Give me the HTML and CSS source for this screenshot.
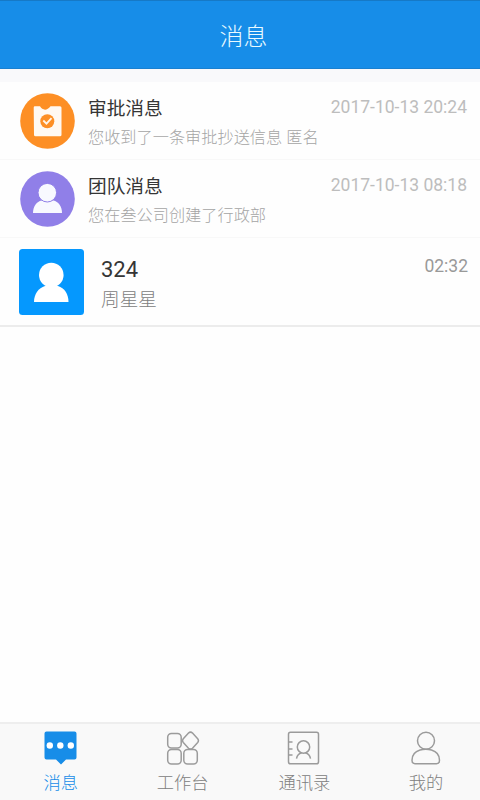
FILE: index.html
```html
<!DOCTYPE html>
<html lang="zh-CN">
<head>
<meta charset="UTF-8">
<title>消息</title>
<link rel="stylesheet" href="styles.css">
</head>
<body>
<div class="app">
  <header class="header"><h1>消息</h1></header>
  <main class="list">
    <article class="row">
      <svg class="avatar" viewBox="0 0 55 56">
        <ellipse cx="27.5" cy="28" rx="27.3" ry="27.8" fill="#fd8f25"/>
        <path d="M14.500 13.300h5.500c2.500 4.200 7 4.700 10.500 0h9.500q1.500 0 1.500 1.500v27q0 1.500-1.500 1.500h-24.500q-1.500 0-1.500-1.500l-.3-27q0-1.500 .8-1.500z" fill="#fff9f2"/>
        <circle cx="27.300" cy="28.200" r="7" fill="#fd8f25"/>
        <path d="M23.300 27.500l3.200 3.200 5-5.500" fill="none" stroke="#fff5e8" stroke-width="1.800"/>
      </svg>
      <div class="content">
        <div class="line"><h2>审批消息</h2><time>2017-10-13 20:24</time></div>
        <p>您收到了一条审批抄送信息 匿名</p>
      </div>
    </article>
    <article class="row">
      <svg class="avatar" viewBox="0 0 55 56">
        <ellipse cx="27.500" cy="28" rx="27.300" ry="27.800" fill="#907fe8"/>
        <path d="M13 42c0-7 4-11.500 8.500-12.500h12c4.500 1 8.500 5.500 8.500 12.500z" fill="#f8f9ff"/>
        <circle cx="27.300" cy="21.700" r="9.300" fill="#f8f9ff" stroke="#907fe8" stroke-width="1"/>
      </svg>
      <div class="content">
        <div class="line"><h2>团队消息</h2><time>2017-10-13 08:18</time></div>
        <p>您在叁公司创建了行政部</p>
      </div>
    </article>
    <article class="row chat">
      <svg class="photo" viewBox="0 0 65 66">
        <rect width="65" height="66" rx="3.500" fill="#0598fe"/>
        <path d="M15 53c0-8 4.500-14 11-16h13c6.500 2 10.500 8 10.500 16z" fill="#fff"/>
        <circle cx="32.300" cy="26" r="12.300" fill="#fff"/>
      </svg>
      <div class="content">
        <div class="line"><h2>324</h2><time>02:32</time></div>
        <p>周星星</p>
      </div>
    </article>
  </main>
  <nav class="tabs">
    <a class="tab active">
      <svg viewBox="0 0 36 36"><path d="M3.500 .5h28q2 0 2 2v24q0 2-2 2H23l-5 5-5-5H3.500q-2 0-2-2V2.500q0-2 2-2z" fill="#178de8"/><g fill="#fff"><circle cx="6.800" cy="14.500" r="3.200"/><circle cx="17.300" cy="14.500" r="3.200"/><circle cx="27.800" cy="14.500" r="3.200"/></g></svg>
      <span>消息</span>
    </a>
    <a class="tab">
      <svg viewBox="0 0 36 36"><g class="stroke"><rect x="2.700" y="2.500" width="13.500" height="14.500" rx="3.800"/><rect x="2.700" y="18.500" width="13.500" height="14.500" rx="3.800"/><rect x="18.800" y="18.500" width="13.500" height="14.500" rx="3.800"/><path d="M23.500 2q2-1.800 4 0l5.200 5.700q1.500 1.900 0 3.800l-5.200 5.700q-2 1.800-4 0l-5.200-5.700q-1.500-1.900 0-3.800z"/></g></svg>
      <span>工作台</span>
    </a>
    <a class="tab">
      <svg viewBox="0 0 36 36"><g class="stroke"><rect x="2.500" y="1.300" width="30" height="31.500" rx="2"/><path d="M2.500 11H6.500M2.500 18H6.500M2.500 24H6.500M10.500 27.700c.6-3.200 2.500-5.400 5.200-6M24.500 27.700c-.6-3.200-2.500-5.400-5.200-6"/><circle cx="17.500" cy="16" r="6.200"/></g></svg>
      <span>通讯录</span>
    </a>
    <a class="tab">
      <svg viewBox="0 0 36 36"><g class="stroke"><circle cx="18" cy="9.800" r="8.500"/><path d="M12 19c-5 1.500-8 5.500-8 10.200 0 2.200 1 3.500 3 3.500h21.500c2 0 3-1.300 3-3.500 0-4.700-3-8.700-8-10.200-3.500-1-8-1-11.500 0z"/></g></svg>
      <span>我的</span>
    </a>
  </nav>
</div>
</body>
</html>
```
FILE: styles.css
```css
* {
  box-sizing: border-box;
  margin: 0;
  padding: 0;
}

html,
body {
  width: 480px;
  height: 800px;
  overflow: hidden;
}

body {
  font-family: Roboto, "Noto Sans CJK SC", sans-serif;
  background: #fefefe;
}

.app {
  display: flex;
  flex-direction: column;
  width: 487px;
  height: 800px;
}

.header {
  height: 69px;
  padding-top: 4px;
  display: flex;
  align-items: center;
  justify-content: center;
  background: #178de8;
  border-top: 1px solid #1679c6;
  border-bottom: 1px solid #1a80d0;
}

.header h1 {
  font-size: 24px;
  line-height: 36px;
  font-weight: 300;
  color: #e9faff;
}

.list {
  flex: 1;
  border-top: 13px solid #f9f9fb;
}

.row {
  display: flex;
  height: 78px;
  padding: 11px 20px 0 20px;
  border-bottom: 1px solid #f8f8f8;
}

.avatar {
  width: 55px;
  height: 56px;
  margin-right: 13px;
}

.content {
  flex: 1;
}

.line {
  display: flex;
  justify-content: space-between;
}

h2 {
  font-size: 18.700px;
  line-height: 32px;
  font-weight: 400;
  color: #353535;
}

time {
  font-size: 17.500px;
  line-height: 28px;
  color: #bdbdbd;
}

.row p {
  margin-top: 1px;
  font-size: 16.200px;
  line-height: 24px;
  font-weight: 300;
  color: #a5a5a5;
}

.chat {
  height: 89px;
  padding-left: 19px;
  padding-right: 19px;
  border-bottom: 2px solid #ececec;
}

.photo {
  width: 65px;
  height: 66px;
  margin-right: 17px;
}

.chat h2 {
  font-size: 22px;
  line-height: 42px;
}

.chat time {
  line-height: 34px;
  color: #999;
}

.chat p {
  margin-top: -3px;
  font-size: 18.700px;
  color: #808080;
}

.tabs {
  display: flex;
  height: 78px;
  padding-top: 7px;
  background: #f9f9f9;
  border-top: 2px solid #eee;
}

.tab {
  flex: 1;
  display: flex;
  flex-direction: column;
  align-items: center;
  color: #808080;
  font-size: 17.300px;
  font-weight: 300;
  line-height: 33px;
}

.tab svg {
  width: 36px;
  height: 36px;
}

.active {
  color: #178de8;
}

.stroke {
  fill: none;
  stroke: #9b9b9b;
  stroke-width: 1.500;
}
```
